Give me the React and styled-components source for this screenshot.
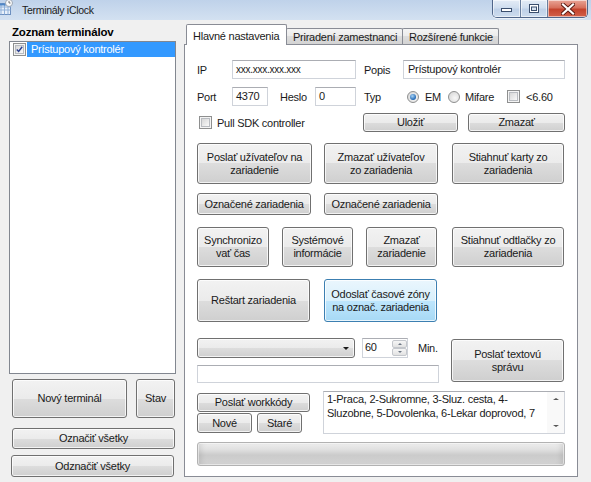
import React from "react";
import styled, { createGlobalStyle, css } from "styled-components";

const GlobalStyle = createGlobalStyle`
  html, body { margin: 0; padding: 0; background: #f0f0f0; }
  body {
    font-family: "Liberation Sans", Arial, sans-serif;
    font-size: 11px;
    letter-spacing: -0.25px;
    color: #1a1a1a;
  }
  * { box-sizing: border-box; }
`;

const Window = styled.div`
  width: 591px;
  height: 482px;
  overflow: hidden;
  background: #f0f0f0;
  display: flex;
  flex-direction: column;
`;

const TitleBar = styled.div`
  height: 20px;
  flex: none;
  display: flex;
  align-items: flex-start;
  background: linear-gradient(#bfd2ea, #d3e1f1);
`;

const AppIcon = styled.svg`
  margin-left: -3px;
  margin-top: 0;
  flex: none;
`;

const TitleText = styled.span`
  margin-left: 9px;
  margin-top: 4px;
  font-size: 10.5px;
  letter-spacing: -0.3px;
  color: #1b1b1b;
`;

const WinButtons = styled.div`
  margin-left: auto;
  margin-right: 3px;
  display: flex;
  height: 18px;
  border: 1px solid #50668a;
  border-top: none;
  border-radius: 0 0 5px 5px;
  overflow: hidden;
  box-shadow: 0 1px 0 rgba(255, 255, 255, 0.6);
`;

const WinBtn = styled.div`
  width: ${(p) => p.$w}px;
  height: 100%;
  display: flex;
  align-items: center;
  justify-content: center;
  border-left: ${(p) => (p.$first ? "none" : "1px solid #6a7f9e")};
  box-shadow: inset 0 0 0 1px rgba(255, 255, 255, 0.55);
  background: ${(p) =>
    p.$close
      ? "linear-gradient(#e9a597, #d7705d 45%, #c4432d 55%, #d2614b)"
      : "linear-gradient(#e4ecf6, #d0deef 45%, #bfd1e8 55%, #cddcee)"};
`;

const Body = styled.div`
  flex: 1;
  display: flex;
`;

/* ---------- left column ---------- */

const Left = styled.div`
  width: 184px;
  flex: none;
  padding: 5px 0 0 9px;
  display: flex;
  flex-direction: column;
`;

const Header = styled.div`
  height: 14px;
  line-height: 14px;
  margin-left: 3px;
  font-weight: bold;
  font-size: 11.5px;
  letter-spacing: -0.2px;
  color: #000;
`;

const ListBox = styled.div`
  width: 167px;
  height: 333px;
  margin-top: 2px;
  border: 1px solid #828790;
  background: #fff;
  padding: 0 0 0 3px;
`;

const ListItem = styled.div`
  display: flex;
  align-items: center;
  height: 15px;
`;

const Selected = styled.div`
  flex: 1;
  height: 15px;
  margin-left: 1px;
  padding-left: 4px;
  line-height: 15px;
  background: #3399ff;
  color: #fff;
`;

const BtnRow = styled.div`
  display: flex;
  align-items: ${(p) => p.$align || "flex-start"};
  margin-top: ${(p) => p.$mt || 0}px;
  margin-left: ${(p) => p.$ml || 0}px;
  ${(p) => p.$h && css`height: ${p.$h}px;`}
`;

const Btn = styled.button`
  flex: none;
  width: ${(p) => p.$w}px;
  height: ${(p) => p.$h}px;
  margin-left: ${(p) => p.$ml || 0}px;
  margin-top: ${(p) => p.$mt || 0}px;
  padding: 0 2px;
  font-family: inherit;
  font-size: 11px;
  letter-spacing: inherit;
  line-height: 13px;
  color: #1a1a1a;
  text-align: center;
  border: 1px solid ${(p) => (p.$hot ? "#3c7fb1" : "#707070")};
  border-radius: 3px;
  box-shadow: inset 0 0 0 1px rgba(255, 255, 255, 0.75);
  background: ${(p) =>
    p.$hot
      ? "linear-gradient(#eaf6fd 0%, #d9f0fc 50%, #bee6fd 50%, #a7d9f5 100%)"
      : "linear-gradient(#f2f2f2 0%, #ebebeb 50%, #dddddd 50%, #cfcfcf 100%)"};
`;

/* ---------- tabs ---------- */

const Right = styled.div`
  width: 394px;
  flex: none;
  display: flex;
  flex-direction: column;
`;

const TabStrip = styled.div`
  height: 24px;
  display: flex;
  align-items: flex-end;
  padding-left: 2px;
`;

const Tab = styled.div`
  width: ${(p) => p.$w}px;
  flex: none;
  padding-left: 6px;
  line-height: 16px;
  white-space: nowrap;
  overflow: hidden;
  border: 1px solid #898c95;
  border-bottom: none;
  border-radius: 2px 2px 0 0;
  ${(p) =>
    p.$active
      ? css`
          height: 21px;
          padding-top: 3px;
          margin-bottom: -1px;
          background: #fff;
          position: relative;
          z-index: 2;
        `
      : css`
          height: 16px;
          margin-left: -1px;
          background: linear-gradient(#f4f4f4, #ebebeb 50%, #dddddd 50%, #d3d3d3);
        `}
`;

const Page = styled.div`
  width: 394px;
  height: 433px;
  border: 1px solid #898c95;
  background: #fff;
  padding: 15px 12px 0 12px;
  display: flex;
  flex-direction: column;
`;

const Label = styled.div`
  width: ${(p) => p.$w}px;
  margin-left: ${(p) => p.$ml || 0}px;
  flex: none;
`;

const Text = styled.span`
  margin-left: ${(p) => p.$ml || 0}px;
  white-space: nowrap;
`;

const Field = styled.div`
  width: ${(p) => p.$w}px;
  height: ${(p) => p.$h || 19}px;
  flex: none;
  border: 1px solid #cfd3da;
  border-top-color: #abadb3;
  background: #fff;
  padding-left: ${(p) => p.$pl || 3}px;
  line-height: ${(p) => (p.$h || 19) - 2}px;
  font-size: ${(p) => p.$fs || 11}px;
  margin-left: ${(p) => p.$ml || 0}px;
  margin-top: ${(p) => p.$mt || 0}px;
  white-space: nowrap;
  overflow: hidden;
`;

const CheckBox = styled.div`
  width: 13px;
  height: 13px;
  flex: none;
  margin-left: ${(p) => p.$ml || 0}px;
  border: 1px solid #8e8f8f;
  background: #f4f4f4;
  padding: 1px;
  & > div {
    width: 100%;
    height: 100%;
    border: 1px solid #b9bcc1;
    background: linear-gradient(135deg, #d7d7d7, #f9f9f9);
    display: flex;
    align-items: center;
    justify-content: center;
  }
`;

const Radio = styled.div`
  width: 12px;
  height: 12px;
  flex: none;
  margin-left: ${(p) => p.$ml || 0}px;
  border-radius: 50%;
  border: 1px solid #8e8f8f;
  background: radial-gradient(circle at 60% 60%, #f8f8f8, #d2d2d2);
  display: flex;
  align-items: center;
  justify-content: center;
  &::after {
    content: "";
    display: ${(p) => (p.$on ? "block" : "none")};
    width: 6px;
    height: 6px;
    border-radius: 50%;
    background: radial-gradient(circle at 40% 35%, #a9d4f6, #1f66b3 70%, #14488a);
  }
`;

const Combo = styled.div`
  width: 158px;
  height: 20px;
  flex: none;
  border: 1px solid #707070;
  border-radius: 3px;
  box-shadow: inset 0 0 0 1px rgba(255, 255, 255, 0.75);
  background: linear-gradient(#f2f2f2 0%, #ebebeb 50%, #dddddd 50%, #cfcfcf 100%);
  display: flex;
  align-items: center;
  justify-content: flex-end;
  padding-right: 5px;
`;

const Arrow = styled.div`
  width: 0;
  height: 0;
  border-left: ${(p) => p.$s || 3.5}px solid transparent;
  border-right: ${(p) => p.$s || 3.5}px solid transparent;
  ${(p) =>
    p.$up
      ? css`border-bottom: ${p.$s ? p.$s - 0.5 : 3}px solid ${p.$c || "#1a1a1a"};`
      : css`border-top: ${p.$s ? p.$s - 0.5 : 3}px solid ${p.$c || "#1a1a1a"};`}
`;

const Spin = styled.div`
  width: 46px;
  height: 20px;
  margin-left: 7px;
  flex: none;
  display: flex;
  border: 1px solid #cfd3da;
  border-top-color: #abadb3;
  background: #fff;
`;

const SpinText = styled.div`
  flex: 1;
  padding-left: 2px;
  line-height: 17px;
`;

const SpinBtns = styled.div`
  width: 15px;
  display: flex;
  flex-direction: column;
  padding: 1px 0;
`;

const SpinBtn = styled.div`
  flex: 1;
  border: 1px solid #c4c7cc;
  border-radius: 2px;
  background: linear-gradient(#f6f6f6, #e2e2e2);
  display: flex;
  align-items: center;
  justify-content: center;
`;

const Stack = styled.div`
  width: ${(p) => p.$w}px;
  margin-left: ${(p) => p.$ml || 0}px;
  flex: none;
  display: flex;
  flex-direction: column;
`;

const Memo = styled.div`
  width: 242px;
  height: 43px;
  margin-left: 13px;
  flex: none;
  display: flex;
  border: 1px solid #cfd3da;
  border-top-color: #abadb3;
  background: #fff;
`;

const MemoText = styled.div`
  flex: 1;
  padding: 0 0 0 3px;
  line-height: 14px;
  white-space: nowrap;
  overflow: hidden;
`;

const ScrollBar = styled.div`
  width: 17px;
  flex: none;
  background: #f9f9f9;
  display: flex;
  flex-direction: column;
  justify-content: space-between;
  align-items: center;
  padding: 6px 0 6px;
`;

const Progress = styled.div`
  width: 368px;
  height: 24px;
  margin-top: 8px;
  border: 1px solid #b2b2b2;
  border-radius: 3px;
  background: linear-gradient(#eeeeee 0%, #e0e0e0 30%, #cbcbcb 55%, #d3d3d3 100%);
  box-shadow: inset 0 0 0 1px rgba(255, 255, 255, 0.5), inset 6px 0 6px -4px rgba(0, 0, 0, 0.12),
    inset -6px 0 6px -4px rgba(0, 0, 0, 0.12);
`;

const Check = () => (
  <svg width="9" height="9" viewBox="0 0 9 9">
    <path d="M1 4.5 L3.4 7 L8 1" fill="none" stroke="#2a3f8f" strokeWidth="1.8" />
  </svg>
);

const TitleIcon = () => (
  <AppIcon width="16" height="16" viewBox="0 0 16 16">
    <rect x="0.5" y="3.5" width="13" height="11" fill="#e8f0fa" stroke="#6c8fbf" />
    <path d="M0.5 7h13M0.5 10h13M4 3.5v11M7.5 3.5v11M11 3.5v11" stroke="#8fb0d8" strokeWidth="1" />
    <rect x="0.5" y="3.5" width="13" height="2" fill="#4f86c6" />
    <circle cx="12" cy="3" r="3.5" fill="#fbfbfb" stroke="#9aa6b4" />
    <path d="M12 1v2h1.5" stroke="#555" strokeWidth="0.8" fill="none" />
  </AppIcon>
);

export default function App() {
  return (
    <>
      <GlobalStyle />
      <Window>
        <TitleBar>
          <TitleIcon />
          <TitleText>Terminály iClock</TitleText>
          <WinButtons>
            <WinBtn $w={27} $first>
              <svg width="11" height="6" viewBox="0 0 11 6">
                <rect x="0.5" y="2.5" width="10" height="3" fill="#fff" stroke="#3b4f6e" />
              </svg>
            </WinBtn>
            <WinBtn $w={27}>
              <svg width="10" height="9" viewBox="0 0 10 9">
                <rect x="0.5" y="0.5" width="9" height="8" fill="#fff" stroke="#3b4f6e" />
                <rect x="2.5" y="3" width="5" height="3.5" fill="#d6e2f0" stroke="#3b4f6e" />
              </svg>
            </WinBtn>
            <WinBtn $w={40} $close>
              <svg width="14" height="12" viewBox="0 0 14 12">
                <path d="M2 1.5 L12 10.5 M12 1.5 L2 10.5" stroke="#5a1a12" strokeWidth="4" strokeLinecap="square" />
                <path d="M2 1.5 L12 10.5 M12 1.5 L2 10.5" stroke="#fff" strokeWidth="2.2" strokeLinecap="square" />
              </svg>
            </WinBtn>
          </WinButtons>
        </TitleBar>

        <Body>
          <Left>
            <Header>Zoznam terminálov</Header>
            <ListBox>
              <ListItem>
                <CheckBox>
                  <div>
                    <Check />
                  </div>
                </CheckBox>
                <Selected>Prístupový kontrolér</Selected>
              </ListItem>
            </ListBox>
            <BtnRow $mt={5} $ml={3}>
              <Btn $w={115} $h={39}>Nový terminál</Btn>
              <Btn $w={39} $h={39} $ml={9}>Stav</Btn>
            </BtnRow>
            <Btn $w={163} $h={21} $mt={10} $ml={3}>Označiť všetky</Btn>
            <Btn $w={163} $h={22} $mt={6} $ml={2}>Odznačiť všetky</Btn>
          </Left>

          <Right>
            <TabStrip>
              <Tab $w={101} $active>Hlavné nastavenia</Tab>
              <Tab $w={117}>Priradení zamestnanci</Tab>
              <Tab $w={97}>Rozšírené funkcie</Tab>
            </TabStrip>
            <Page>
              <BtnRow $align="center">
                <Label $w={35}>IP</Label>
                <Field $w={124} $fs={10}>xxx.xxx.xxx.xxx</Field>
                <Label $w={39} $ml={8}>Popis</Label>
                <Field $w={162} $pl={4}>Prístupový kontrolér</Field>
              </BtnRow>
              <BtnRow $align="center" $mt={8}>
                <Label $w={35}>Port</Label>
                <Field $w={36}>4370</Field>
                <Label $w={35} $ml={12}>Heslo</Label>
                <Field $w={41}>0</Field>
                <Label $w={39} $ml={8}>Typ</Label>
                <Radio $ml={4} $on />
                <Text $ml={6}>EM</Text>
                <Radio $ml={7} />
                <Text $ml={5}>Mifare</Text>
                <CheckBox $ml={13}>
                  <div />
                </CheckBox>
                <Text $ml={6}>&lt;6.60</Text>
              </BtnRow>
              <BtnRow $align="center" $mt={7}>
                <CheckBox $ml={2}>
                  <div />
                </CheckBox>
                <Text $ml={5}>Pull SDK controller</Text>
                <Btn $w={95} $h={19} style={{ marginLeft: "auto" }}>Uložiť</Btn>
                <Btn $w={97} $h={19} $ml={10}>Zmazať</Btn>
              </BtnRow>

              <BtnRow $mt={11}>
                <Btn $w={115} $h={41}>Poslať užívateľov na<br />zariadenie</Btn>
                <Btn $w={114} $h={41} $ml={12}>Zmazať užívateľov<br />zo zariadenia</Btn>
                <Btn $w={112} $h={41} $ml={14}>Stiahnuť karty zo<br />zariadenia</Btn>
              </BtnRow>
              <BtnRow $mt={9}>
                <Btn $w={114} $h={22}>Označené zariadenia</Btn>
                <Btn $w={114} $h={22} $ml={13}>Označené zariadenia</Btn>
              </BtnRow>
              <BtnRow $mt={12}>
                <Btn $w={72} $h={40}>Synchronizo<br />vať čas</Btn>
                <Btn $w={71} $h={40} $ml={13}>Systémové<br />informácie</Btn>
                <Btn $w={71} $h={40} $ml={13}>Zmazať<br />zariadenie</Btn>
                <Btn $w={112} $h={40} $ml={15}>Stiahnuť odtlačky zo<br />zariadenia</Btn>
              </BtnRow>
              <BtnRow $mt={12}>
                <Btn $w={113} $h={43}>Reštart zariadenia</Btn>
                <Btn $w={113} $h={43} $ml={14} $hot>Odoslať časové zóny<br />na označ. zariadenia</Btn>
              </BtnRow>

              <BtnRow $mt={16}>
                <Stack $w={242}>
                  <BtnRow $align="center" $h={20}>
                    <Combo>
                      <Arrow />
                    </Combo>
                    <Spin>
                      <SpinText>60</SpinText>
                      <SpinBtns>
                        <SpinBtn>
                          <Arrow $up $s={2.5} $c="#6d7784" />
                        </SpinBtn>
                        <SpinBtn>
                          <Arrow $s={2.5} $c="#6d7784" />
                        </SpinBtn>
                      </SpinBtns>
                    </Spin>
                    <Text $ml={10}>Min.</Text>
                  </BtnRow>
                  <Field $w={242} $h={18} $mt={7} />
                </Stack>
                <Btn $w={113} $h={43} $ml={12} $mt={1}>Poslať textovú<br />správu</Btn>
              </BtnRow>

              <BtnRow $mt={8}>
                <Stack $w={113}>
                  <Btn $w={113} $h={19} $mt={2}>Poslať workkódy</Btn>
                  <BtnRow $mt={1}>
                    <Btn $w={55} $h={20}>Nové</Btn>
                    <Btn $w={45} $h={20} $ml={5}>Staré</Btn>
                  </BtnRow>
                </Stack>
                <Memo>
                  <MemoText>
                    1-Praca, 2-Sukromne, 3-Sluz. cesta, 4-
                    <br />
                    Sluzobne, 5-Dovolenka, 6-Lekar doprovod, 7
                  </MemoText>
                  <ScrollBar>
                    <Arrow $up $s={3} $c="#555" />
                    <Arrow $s={3} $c="#555" />
                  </ScrollBar>
                </Memo>
              </BtnRow>

              <Progress />
            </Page>
          </Right>
        </Body>
      </Window>
    </>
  );
}
